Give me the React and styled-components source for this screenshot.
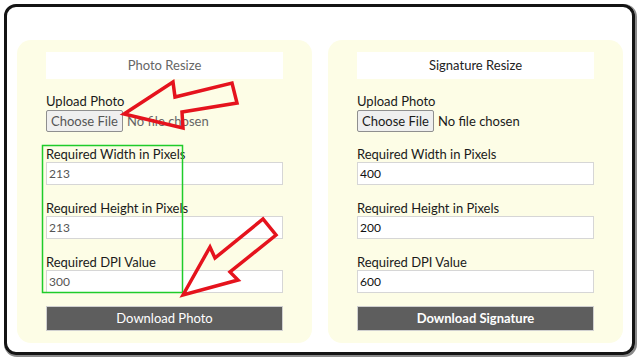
import React from "react";
import styled, { createGlobalStyle } from "styled-components";

const GlobalStyle = createGlobalStyle`
  html, body {
    margin: 0;
    padding: 0;
    background: #ffffff;
  }
  body {
    font-family: Lato, "Open Sans", sans-serif;
  }
`;

const Page = styled.div`
  position: relative;
  width: 638px;
  height: 362px;
  padding: 4px 0 0 4px;
  box-sizing: border-box;
`;

const Frame = styled.div`
  width: 631px;
  height: 351px;
  box-sizing: border-box;
  border: 3px solid #141414;
  border-radius: 12px;
  box-shadow: 1px 1px 0 1px #8a8a8a;
  padding: 33px 9px 9px 10px;
  display: flex;
  gap: 16px;
`;

const Panel = styled.div`
  flex: 1;
  background: #fdfde6;
  border-radius: 14px;
  padding: 12px 29px 12px 29px;
  display: flex;
  flex-direction: column;
`;

const Title = styled.div`
  height: 28px;
  background: #ffffff;
  display: flex;
  align-items: center;
  justify-content: center;
  font-size: 13px;
  color: ${(p) => (p.$muted ? "#666666" : "#222222")};
  margin-bottom: 14px;
`;

const Label = styled.div`
  font-size: 13px;
  line-height: 16px;
  color: #1a1a1a;
`;

const FileRow = styled.div`
  display: flex;
  align-items: center;
  gap: 4px;
  margin-top: 1px;
  margin-bottom: 14px;
`;

const FileButton = styled.button`
  height: 22px;
  width: 77px;
  padding: 0;
  font-family: inherit;
  font-size: 13px;
  color: ${(p) => (p.$muted ? "#555555" : "#1a1a1a")};
  background: #efefef;
  border: 1px solid #8f8f8f;
  border-radius: 2px;
`;

const FileText = styled.span`
  font-size: 13px;
  color: ${(p) => (p.$muted ? "#666666" : "#1a1a1a")};
`;

const Field = styled.div`
  display: flex;
  flex-direction: column;
  margin-bottom: ${(p) => (p.$last ? "13px" : "15px")};
`;

const Input = styled.div`
  height: 23px;
  box-sizing: border-box;
  background: #ffffff;
  border: 1px solid #d6d6d6;
  padding: 0 2px;
  display: flex;
  align-items: center;
  font-size: 12px;
  color: ${(p) => (p.$muted ? "#555555" : "#111111")};
`;

const Download = styled.button`
  height: 26px;
  background: #5e5e5e;
  border: 1px solid #d0d0d0;
  color: #ffffff;
  font-family: inherit;
  font-size: 13px;
  font-weight: ${(p) => (p.$bold ? 700 : 400)};
  padding: 0;
`;

const Overlay = styled.svg`
  position: absolute;
  left: 0;
  top: 0;
  pointer-events: none;
`;

const ResizePanel = ({ title, values, button, muted }) => (
  <Panel>
    <Title $muted={muted}>{title}</Title>
    <Label>Upload Photo</Label>
    <FileRow>
      <FileButton $muted={muted}>Choose File</FileButton>
      <FileText $muted={muted}>No file chosen</FileText>
    </FileRow>
    <Field>
      <Label>Required Width in Pixels</Label>
      <Input $muted={muted}>{values[0]}</Input>
    </Field>
    <Field>
      <Label>Required Height in Pixels</Label>
      <Input $muted={muted}>{values[1]}</Input>
    </Field>
    <Field $last>
      <Label>Required DPI Value</Label>
      <Input $muted={muted}>{values[2]}</Input>
    </Field>
    <Download $bold={!muted}>{button}</Download>
  </Panel>
);

export default function App() {
  return (
    <Page>
      <GlobalStyle />
      <Frame>
        <ResizePanel
          title="Photo Resize"
          values={["213", "213", "300"]}
          button="Download Photo"
          muted
        />
        <ResizePanel
          title="Signature Resize"
          values={["400", "200", "600"]}
          button="Download Signature"
        />
      </Frame>
      <Overlay width="638" height="362" viewBox="0 0 638 362">
        <rect x="42.5" y="145.5" width="140" height="147" fill="none" stroke="#1fcc2a" strokeWidth="1.5" />
        <polygon
          points="124,114 173,82 175,97 232,83 237,103 182,112 183,128"
          fill="none"
          stroke="#e5131d"
          strokeWidth="3.5"
          strokeLinejoin="miter"
        />
        <polygon
          points="183,295 210,247 215,258 263,219 276,235 230,272 238,280"
          fill="none"
          stroke="#e5131d"
          strokeWidth="3.5"
          strokeLinejoin="miter"
        />
      </Overlay>
    </Page>
  );
}
